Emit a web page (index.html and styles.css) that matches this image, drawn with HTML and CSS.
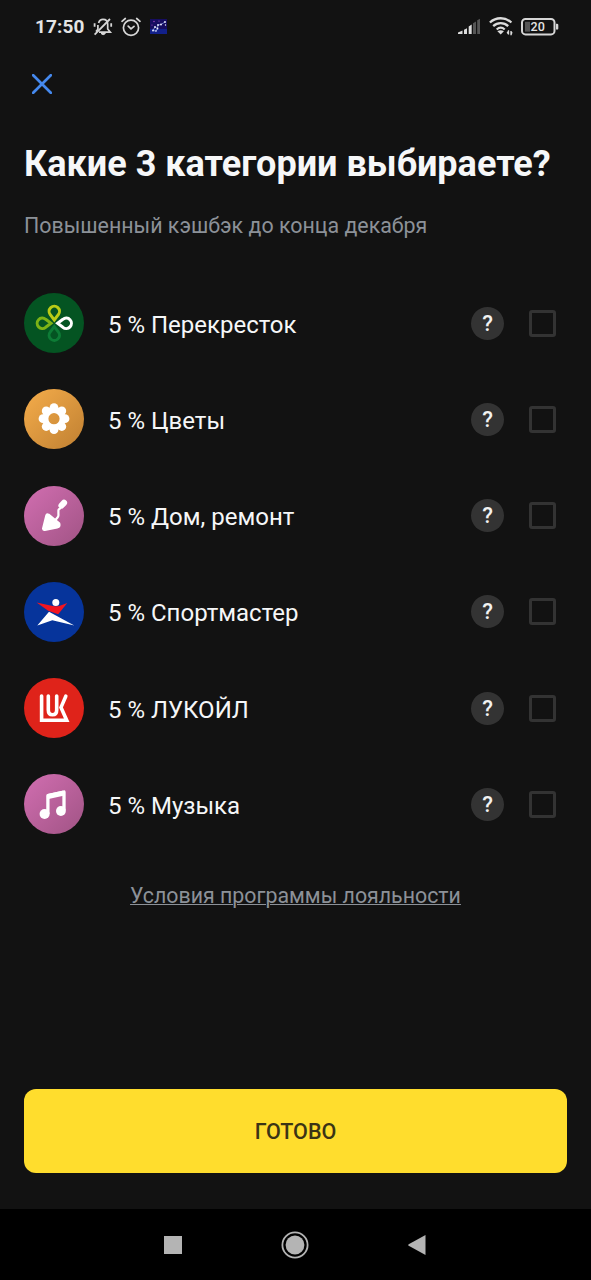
FILE: index.html
```html
<!DOCTYPE html>
<html lang="ru">
<head>
<meta charset="utf-8">
<title>Категории кэшбэка</title>
<link rel="stylesheet" href="styles.css">
</head>
<body>
<div class="screen">
  <header class="status">
    <span class="time">17:50</span>
    <svg class="mute" width="20" height="20" viewBox="0 0 20 20" fill="none" stroke="#d6d6d6" stroke-width="1.7">
      <path d="M5.6 6C6.4 3.4 8 2.4 10 2.4c3 0 4.7 2 4.7 5.1V12l2.6 3.2H6M4.9 8v4.2L3 14.6"/>
      <path d="M1.6 17.6L17 2" stroke-width="1.8"/><path d="M1.6 6.3v3.4M18.2 6.3v3.4" stroke-width="1.8"/>
      <path d="M8 16.5h4.4q-2.2 2.4-4.4 0z" fill="#d6d6d6" stroke-width="1"/>
    </svg>
    <svg class="alarm" width="20" height="20" viewBox="0 0 20 20" fill="none" stroke="#d6d6d6" stroke-width="1.7" stroke-linecap="round">
      <circle cx="10" cy="10.8" r="7.6"/><path d="M1 4.3L4.3 1.5M19 4.3L15.7 1.5M7.2 9.2L10 11.9l3-2.5"/>
    </svg>
    <svg class="stars" width="17" height="15" viewBox="0 0 17 15">
      <rect width="17" height="15" fill="#160d60"/><path d="M0 10h17v5H0z" fill="#12208a"/>
      <path d="M3 11.5l2-3.5 2.5 1.5L6 12zM7.5 9.5L8 6l3-.5 4-2.5" fill="none" stroke="#8295e0" stroke-width=".8"/>
      <g fill="#f0f0ff"><circle cx="3" cy="11.5" r=".9"/><circle cx="5" cy="8" r=".9"/><circle cx="7.5" cy="9.5" r=".9"/><circle cx="6" cy="12" r=".8"/><circle cx="8" cy="6" r=".9"/><circle cx="11" cy="5.5" r=".9"/><circle cx="15" cy="3" r=".9"/><circle cx="15.5" cy="6" r=".7"/></g>
      <g fill="#b04cc8"><circle cx="4" cy="2.5" r=".7"/><circle cx="9" cy="2" r=".6"/><circle cx="2" cy="6" r=".6"/></g>
    </svg>
    <span class="spacer"></span>
    <svg class="signal" width="23" height="17" viewBox="0 0 23 17">
      <g fill="#dcdcdc"><path d="M0 16v-1.6L4.5 12.4V16zM6 11.8l3-1.5V16H6zM10.7 8.4l3-1.8V16h-3z"/></g>
      <g fill="#555"><path d="M15 5.2l3-1.8V16h-3zM19.2 2.2L22 .7V16h-2.8z"/></g>
    </svg>
    <svg class="wifi" width="24" height="19" viewBox="0 0 24 19" fill="none" stroke="#dcdcdc" stroke-width="2.3">
      <path d="M.9 5.5C7-.2 16.3-.2 22.4 5.5M4.2 9.2c4.3-4 10.7-4 15 0M7.7 12.5c2.4-2.2 5.6-2.2 8 0"/>
      <path d="M8.4 14.2q3.2-2 6.5 0l-3.2 3.3z" fill="#dcdcdc" stroke="none"/>
      <path d="M19.5 13.3v4.2M22 14v4.2" stroke-width="1.3"/><path d="M17.6 15.8l1.7-2.4v4zM23.7 15.8L22 18.3v-4z" fill="#dcdcdc" stroke="none"/>
    </svg>
    <svg class="battery" width="38" height="18" viewBox="0 0 38 18">
      <rect x="1" y="1" width="32.5" height="15.4" rx="3.5" fill="none" stroke="#d6d6d6" stroke-width="2"/>
      <rect x="4" y="3.8" width="5" height="9.8" fill="#555"/><path d="M35 5.8h1q1.3 0 1.3 1.3v3.3q0 1.2-1.3 1.2h-1z" fill="#d6d6d6"/>
      <text class="charge" x="16.7" y="13.2" text-anchor="middle">20</text>
    </svg>
  </header>

  <button class="close" aria-label="Закрыть"><svg width="20" height="20" viewBox="0 0 20 20"><path d="M1.2 1.2l17.6 17.6M18.8 1.2L1.2 18.8" stroke="#4589ee" stroke-width="2.7" stroke-linecap="round"/></svg></button>
  <h1 class="title">Какие 3 категории выбираете?</h1>
  <p class="subtitle">Повышенный кэшбэк до конца декабря</p>

  <ul class="list">
    <li class="row">
      <svg class="logo green" viewBox="0 0 60 60" fill="none" stroke-width="3">
        <path d="M30.3 27L26.3 21.7A5.2 5.2 0 1 1 34.3 21.7Z" stroke="#0d7c36" transform="rotate(180 30.3 30.3)"/>
        <path d="M30.3 27L26.3 21.7A5.2 5.2 0 1 1 34.3 21.7Z" stroke="#b9cb16"/>
        <path d="M30.3 27L26.3 21.7A5.2 5.2 0 1 1 34.3 21.7Z" stroke="#7db316" transform="rotate(-90 30.3 30.3)"/>
        <path d="M30.3 27L26.3 21.7A5.2 5.2 0 1 1 34.3 21.7Z" stroke="#fff" transform="rotate(90 30.3 30.3)"/>
      </svg>
      <span class="name">5 % Перекресток</span><button class="help">?</button><span class="check"></span>
    </li>
    <li class="row">
      <svg class="logo orange" viewBox="0 0 60 60">
        <g fill="#fff"><circle cx="30" cy="18.7" r="4.4"/><circle cx="37.8" cy="21.9" r="4.4"/><circle cx="41" cy="29.7" r="4.4"/><circle cx="37.8" cy="37.5" r="4.4"/><circle cx="30" cy="40.7" r="4.4"/><circle cx="22.2" cy="37.5" r="4.4"/><circle cx="19" cy="29.7" r="4.4"/><circle cx="22.2" cy="21.9" r="4.4"/></g>
        <circle cx="30" cy="29.7" r="8.6" fill="none" stroke="#fff" stroke-width="6"/>
      </svg>
      <span class="name">5 % Цветы</span><button class="help">?</button><span class="check"></span>
    </li>
    <li class="row">
      <svg class="logo pink" viewBox="0 0 60 60" stroke="#fff" stroke-linecap="round" stroke-linejoin="round">
        <path d="M23.7 29.8L34 38.2Q34.3 39.5 33 40L20.5 42.5z" fill="#fff" stroke-width="5"/>
        <path d="M31.2 34.3l2.5-3.1q1-1.2.7-3V24.7q-.1-1.6 1.7-2.2" fill="none" stroke-width="2.2"/>
        <path d="M37.5 19.5l2.5-2.7" fill="none" stroke-width="6.2"/>
      </svg>
      <span class="name">5 % Дом, ремонт</span><button class="help">?</button><span class="check"></span>
    </li>
    <li class="row">
      <svg class="logo blue" viewBox="0 0 60 60">
        <circle cx="31.8" cy="20.4" r="3.5" fill="#fff"/>
        <path d="M12.6 20.5L28.7 24Q32 24.7 35.2 24L43.3 20.9 34.2 32.3 24.2 28.8z" fill="#f21520"/>
        <path d="M13.3 43.4L25 29.8 50.3 43.4 28.3 38.2z" fill="#fff"/>
      </svg>
      <span class="name">5 % Спортмастер</span><button class="help">?</button><span class="check"></span>
    </li>
    <li class="row">
      <svg class="logo red" viewBox="0 0 60 60" fill="none" stroke="#fff" stroke-width="3.6">
        <path d="M17.6 18v24.2H42.7L37 29.4 41.8 18.2" stroke-linecap="round"/>
        <path d="M24.3 18v14q0 4.8 4.2 4.8t4.2-4.8V18" stroke-linecap="round"/>
      </svg>
      <span class="name">5 % ЛУКОЙЛ</span><button class="help">?</button><span class="check"></span>
    </li>
    <li class="row">
      <svg class="logo pink" viewBox="0 0 60 60" fill="none" stroke="#fff" stroke-width="3.3" stroke-linejoin="round">
        <path d="M23.9 40V21.7L40 18v18.5"/><path d="M24 22.5L40 19" stroke-width="5"/>
        <circle cx="20.6" cy="40" r="5" fill="#fff" stroke="none"/><circle cx="36.9" cy="37" r="4.9" fill="#fff" stroke="none"/>
      </svg>
      <span class="name">5 % Музыка</span><button class="help">?</button><span class="check"></span>
    </li>
  </ul>

  <a class="terms">Условия программы лояльности</a>
  <button class="done">ГОТОВО</button>
  <nav class="nav">
    <svg width="18" height="18" viewBox="0 0 18 18"><path d="M0 0h18v18H0z" fill="#b4b4b4"/></svg>
    <svg width="28" height="28" viewBox="0 0 28 28"><circle cx="14" cy="14" r="12.6" fill="none" stroke="#b4b4b4" stroke-width="1.8"/><circle cx="14" cy="14" r="9.4" fill="#b4b4b4"/></svg>
    <svg width="18" height="20" viewBox="0 0 18 20"><path d="M17.5 0v20L.7 10.8q-1-.8 0-1.6z" fill="#b4b4b4"/></svg>
  </nav>
</div>
</body>
</html>
```
FILE: styles.css
```css
* { box-sizing: border-box; }
body { margin: 0; background: #121212; font-family: Roboto, sans-serif; color: #f6f7f8; }
button { border: 0; padding: 0; font-family: inherit; }
svg { display: block; flex: none; }
.screen { width: 591px; height: 1280px; display: flex; flex-direction: column; overflow: hidden; }
.status { height: 53px; padding: 0 32px 0 35px; display: flex; align-items: center; flex: none; }
.time { font-size: 19px; line-height: 22px; font-weight: 700; color: #e4e4e4; width: 58px; letter-spacing: .1px; }
.alarm { margin-left: 8px; }
.stars { margin-left: 9px; }
.spacer { flex: 1; }
.wifi { margin-left: 8px; }
.battery { margin-left: 8px; }
.charge { font-size: 12.5px; font-weight: 500; fill: #e4e4e4; }
.close { width: 20px; height: 20px; margin: 21px 0 0 32px; background: none; flex: none; }
.title { margin: 48px 24px 0; font-size: 36.05px; line-height: 44px; font-weight: 700; white-space: nowrap; }
.subtitle { margin: 26px 24px 0; font-size: 21.4px; line-height: 28px; color: #8c9198; white-space: nowrap; }
.list { list-style: none; margin: 53px 0 0; padding: 0 35px 0 24px; display: grid; row-gap: 36.3px; }
.row { height: 60px; display: flex; align-items: center; }
.logo { width: 60px; height: 60px; border-radius: 50%; }
.green { background: #045422; }
.orange { background: linear-gradient(135deg, #eda647 15%, #c28233 95%); }
.pink { background: linear-gradient(135deg, #ca6aaa 15%, #a35587 95%); }
.blue { background: #06349b; }
.red { background: #df231a; }
.name { flex: 1; padding: 3px 0 0 24px; font-size: 24px; line-height: 30px; white-space: nowrap; }
.help { width: 33px; height: 33px; border-radius: 50%; background: #333; color: #f2f2f2; font-size: 22px; line-height: 33px; font-weight: 500; }
.check { width: 27px; height: 27px; margin-left: 25px; border: 3px solid #333; border-radius: 3px; }
.terms { align-self: center; margin-top: 48px; font-size: 21.35px; line-height: 28px; color: #8c9198; text-decoration: underline; text-decoration-thickness: 1px; white-space: nowrap; }
.done { margin: auto 24px 36px; height: 84px; flex: none; border-radius: 12px; background: #ffdd2d; color: #3b3415; font-size: 21.5px; font-weight: 500; }
.nav { height: 71px; padding-right: 1px; flex: none; background: #000; display: flex; align-items: center; justify-content: center; gap: 99px; }
```
